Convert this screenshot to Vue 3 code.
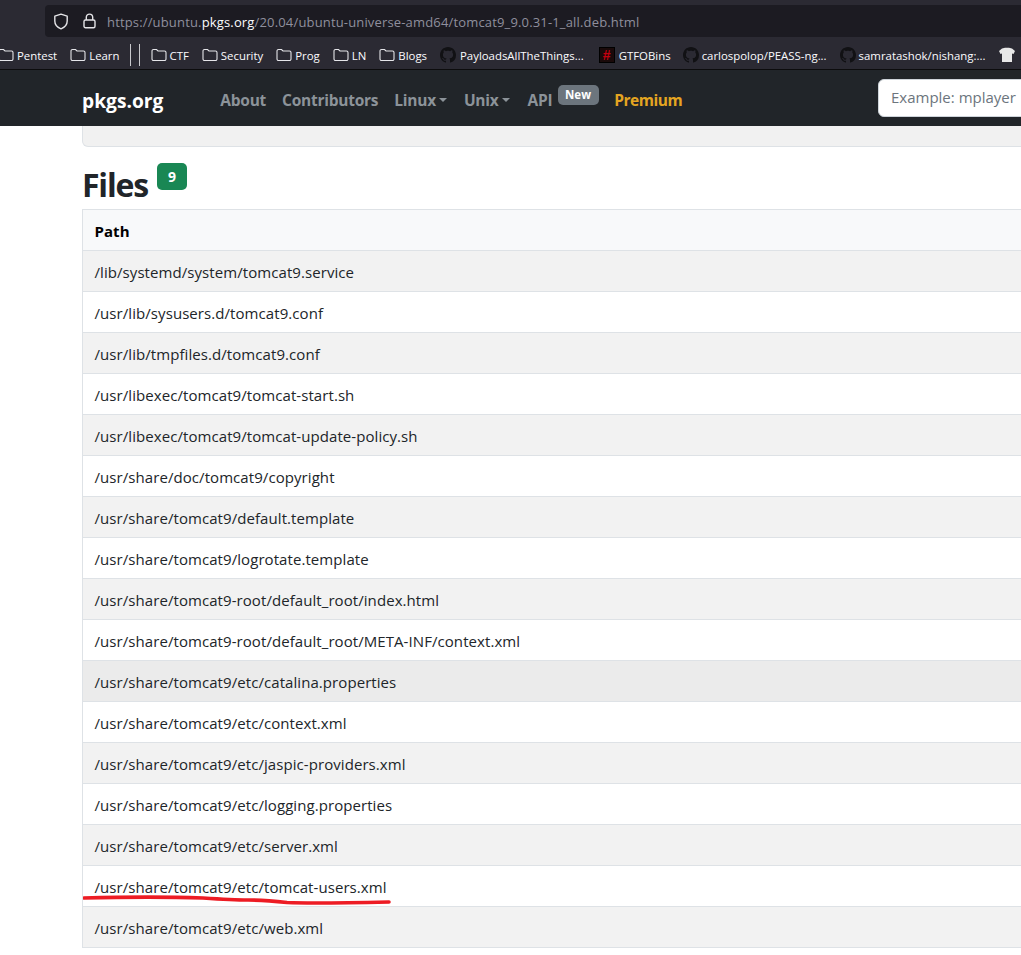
<script setup>
const paths = [
  '/lib/systemd/system/tomcat9.service',
  '/usr/lib/sysusers.d/tomcat9.conf',
  '/usr/lib/tmpfiles.d/tomcat9.conf',
  '/usr/libexec/tomcat9/tomcat-start.sh',
  '/usr/libexec/tomcat9/tomcat-update-policy.sh',
  '/usr/share/doc/tomcat9/copyright',
  '/usr/share/tomcat9/default.template',
  '/usr/share/tomcat9/logrotate.template',
  '/usr/share/tomcat9-root/default_root/index.html',
  '/usr/share/tomcat9-root/default_root/META-INF/context.xml',
  '/usr/share/tomcat9/etc/catalina.properties',
  '/usr/share/tomcat9/etc/context.xml',
  '/usr/share/tomcat9/etc/jaspic-providers.xml',
  '/usr/share/tomcat9/etc/logging.properties',
  '/usr/share/tomcat9/etc/server.xml',
  '/usr/share/tomcat9/etc/tomcat-users.xml',
  '/usr/share/tomcat9/etc/web.xml'
]
const hovered = '/usr/share/tomcat9/etc/catalina.properties'
const folders1 = ['Pentest', 'Learn']
const folders2 = ['CTF', 'Security', 'Prog', 'LN', 'Blogs']
const ghPath = 'M8 0C3.58 0 0 3.58 0 8c0 3.54 2.29 6.53 5.47 7.59.4.07.55-.17.55-.38 0-.19-.01-.82-.01-1.49-2.01.37-2.53-.49-2.69-.94-.09-.23-.48-.94-.82-1.13-.28-.15-.68-.52-.01-.53.63-.01 1.08.58 1.23.82.72 1.21 1.87.87 2.33.66.07-.52.28-.87.51-1.07-1.78-.2-3.64-.89-3.64-3.95 0-.87.31-1.59.82-2.15-.08-.2-.36-1.02.08-2.12 0 0 .67-.21 2.2.82.64-.18 1.32-.27 2-.27s1.36.09 2 .27c1.53-1.04 2.2-.82 2.2-.82.44 1.1.16 1.92.08 2.12.51.56.82 1.27.82 2.15 0 3.07-1.87 3.75-3.65 3.95.29.25.54.73.54 1.48 0 1.07-.01 1.93-.01 2.2 0 .21.15.46.55.38A8.01 8.01 0 0 0 16 8c0-4.42-3.58-8-8-8z'
</script>

<template>
  <div class="page">
    <header class="browser">
      <div class="url-row">
        <div class="urlbar">
          <svg class="shield" width="16" height="17" viewBox="0 0 16 17" fill="none" stroke="#e4e4e7" stroke-width="1.4">
            <path d="M8 1.2 14.2 3.2V8c0 3.6-2.6 6.4-6.2 7.8C4.400 14.400 1.800 11.600 1.800 8V3.200Z" stroke-linejoin="round" />
          </svg>
          <svg class="lock" width="13" height="16" viewBox="0 0 13 16" fill="none" stroke="#e4e4e7" stroke-width="1.4">
            <path d="M3.300 7V4.300a3.200 3.200 0 0 1 6.400 0V7" />
            <rect x="1" y="7" width="11" height="7.800" rx="1.500" />
          </svg>
          <span class="url">https://ubuntu.<b>pkgs.org</b>/20.04/ubuntu-universe-amd64/tomcat9_9.0.31-1_all.deb.html</span>
        </div>
      </div>
      <div class="bookmarks">
        <div v-for="f in folders1" :key="f" class="bm">
          <svg class="folder" width="16" height="14" viewBox="0 0 16 14" fill="none" stroke="#e6e6ea" stroke-width="1.100">
            <path d="M1 3a1.500 1.500 0 0 1 1.500-1.500h3L7 3h6.500A1.500 1.500 0 0 1 15 4.500v6.500a1.500 1.500 0 0 1-1.500 1.500h-11A1.500 1.500 0 0 1 1 11Z" />
          </svg>
          <span>{{ f }}</span>
        </div>
        <i class="sep first"></i>
        <i class="sep"></i>
        <div v-for="f in folders2" :key="f" class="bm">
          <svg class="folder" width="16" height="14" viewBox="0 0 16 14" fill="none" stroke="#e6e6ea" stroke-width="1.100">
            <path d="M1 3a1.500 1.500 0 0 1 1.500-1.500h3L7 3h6.500A1.500 1.500 0 0 1 15 4.500v6.500a1.500 1.500 0 0 1-1.500 1.500h-11A1.500 1.500 0 0 1 1 11Z" />
          </svg>
          <span>{{ f }}</span>
        </div>
        <div class="bm pat">
          <svg class="gh" width="16" height="16" viewBox="0 0 16 16"><path :d="ghPath" fill="#111114" /></svg>
          <span>PayloadsAllTheThings...</span>
        </div>
        <div class="bm gto">
          <span class="gtoicon">#</span>
          <span>GTFOBins</span>
        </div>
        <div class="bm">
          <svg class="gh" width="16" height="16" viewBox="0 0 16 16"><path :d="ghPath" fill="#111114" /></svg>
          <span>carlospolop/PEASS-ng...</span>
        </div>
        <div class="bm">
          <svg class="gh" width="16" height="16" viewBox="0 0 16 16"><path :d="ghPath" fill="#111114" /></svg>
          <span>samratashok/nishang:...</span>
        </div>
        <svg class="hat" width="16" height="16" viewBox="0 0 16 16">
          <path d="M3 1.500 6 .8h4l3 .7 3 2.500-1.500 3-1.500-.5V15H3V6.500L1.500 7 0 4Z" fill="#e8e8e8" />
        </svg>
      </div>
    </header>

    <nav class="nav">
      <span class="brand">pkgs.org</span>
      <span class="link about">About</span>
      <span class="link">Contributors</span>
      <span class="link caret">Linux</span>
      <span class="link caret">Unix</span>
      <span class="link api">API<span class="new">New</span></span>
      <span class="premium">Premium</span>
      <div class="search">Example: mplayer</div>
    </nav>

    <main class="main">
      <div class="card"></div>
      <h2 class="title"><span class="title-text">Files</span><span class="count">9</span></h2>
      <table class="files">
        <thead>
          <tr><th>Path</th></tr>
        </thead>
        <tbody>
          <tr v-for="p in paths" :key="p" :class="{ hovered: p === hovered }"><td>{{ p }}</td></tr>
        </tbody>
      </table>
    </main>

    <svg class="scribble" width="320" height="14" viewBox="0 0 320 14" fill="none">
      <path d="M1 6 C 40 5 90 5 120 6 C 135 7 150 8 165 8 C 180 8 190 9 204 10.500 C 225 11.500 260 11 306 10" stroke="#ed1c24" stroke-width="3.600" stroke-linecap="round" />
    </svg>
  </div>
</template>

<style>
html, body { margin: 0; padding: 0; background: #fff; overflow: hidden; }
</style>

<style scoped>
.page {
  position: relative;
  width: 1021px;
  height: 955px;
  overflow: hidden;
  background: #fff;
  font-family: "Open Sans", "Noto Sans", sans-serif;
}
.browser { background: #2b2a33; height: 70px; box-sizing: border-box; border-bottom: 1px solid #0c0c0d; }
.url-row { height: 37px; padding: 5px 0 0 45px; box-sizing: border-box; }
.urlbar {
  height: 32px;
  background: #1c1b22;
  border-radius: 4px 0 0 4px;
  display: flex;
  align-items: center;
  padding-left: 8px;
  color: #8f8f9d;
  font-size: 13px;
  white-space: nowrap;
}
.shield { margin-right: 14px; flex: none; }
.lock { margin-right: 11px; flex: none; }
.url { letter-spacing: .16px; padding-top: 1px; }
.url b { font-weight: 400; color: #fbfbfe; }
.bookmarks {
  height: 32px;
  display: flex;
  align-items: center;
  padding-top: 4px;
  box-sizing: border-box;
  margin-left: -2px;
  font-size: 11.400px;
  color: #fbfbfe;
  white-space: nowrap;
}
.bm { display: flex; flex: none; align-items: center; gap: 3px; margin-right: 13px; }
.bm svg { flex: none; }
.pat { margin-right: 15px; gap: 4px; }
.gto { margin-right: 12px; gap: 4px; }
.gtoicon {
  width: 16px;
  height: 16px;
  background: #1a0a0a;
  border: 1px solid #000;
  box-sizing: border-box;
  color: #c4000f;
  font: 700 14px/14px "Liberation Sans", sans-serif;
  text-align: center;
}
.sep { flex: none; width: 1px; height: 22px; background: #c8c8cc; margin-right: 8px; }
.sep.first { margin-left: -3px; }
.sep + .sep { margin-right: 11px; }
.hat { flex: none; margin-left: 1px; }
.nav {
  height: 56px;
  box-sizing: border-box;
  padding-top: 4px;
  background: #212529;
  position: relative;
  z-index: 2;
  display: flex;
  align-items: center;
  padding-left: 82px;
  white-space: nowrap;
}
.brand { font-size: 19.200px; font-weight: 700; color: #fff; margin-right: 57px; }
.link { font-size: 15.500px; font-weight: 700; color: #8c9399; margin-right: 16px; letter-spacing: -.25px; }
.caret { display: flex; align-items: center; margin-right: 17px; }
.caret::after {
  content: "";
  margin-left: 3px;
  border-top: 4px solid #8c9399;
  border-left: 4px solid transparent;
  border-right: 4px solid transparent;
}
.caret + .caret { margin-right: 18px; }
.api { position: relative; margin-right: 62px; }
.new {
  position: absolute;
  left: 30px;
  top: -4px;
  width: 41px;
  height: 20px;
  line-height: 19px;
  text-align: center;
  background: #6c757d;
  border-radius: 5px;
  color: #fff;
  font-size: 11.500px;
  letter-spacing: 0;
}
.premium { font-size: 15.500px; font-weight: 700; color: #e5a521; letter-spacing: -.5px; }
.search {
  position: absolute;
  left: 878px;
  top: 9px;
  width: 200px;
  height: 38px;
  box-sizing: border-box;
  background: #fff;
  border: 1px solid #ced4da;
  border-radius: 6px;
  padding-left: 12px;
  line-height: 35px;
  font-size: 15px;
  color: #6c757d;
}
.main { padding: 0 0 0 82px; width: 1100px; box-sizing: border-box; }
.card {
  height: 21px;
  background: #f1f1f1;
  border: 1px solid #dee2e6;
  border-top: 0;
  border-radius: 0 0 6px 6px;
  box-sizing: border-box;
}
.title {
  display: flex;
  margin: 16px 0 0;
  height: 46px;
  font-size: 32px;
  line-height: 44px;
  font-weight: 700;
  color: #212529;
}
.title-text { letter-spacing: -1.200px; }
.count {
  width: 30px;
  height: 27px;
  margin: 0 0 0 9px;
  background: #198754;
  border-radius: 5px;
  color: #fff;
  font-size: 14px;
  line-height: 27px;
  letter-spacing: 0;
  text-align: center;
}
.files {
  width: 1018px;
  border-collapse: collapse;
  font-size: 15px;
  letter-spacing: .07px;
  color: #212529;
}
.files th, .files td {
  border: 1px solid #dee2e6;
  height: 41px;
  padding: 2px 11.500px 0;
  box-sizing: border-box;
  text-align: left;
}
.files th { background: #f8f9fa; color: #000; font-weight: 700; }
.files tbody tr:nth-child(odd) td { background: #f2f2f2; }
.files tbody tr.hovered td { background: #ebebeb; }
.scribble { position: absolute; left: 83px; top: 892px; }
</style>
